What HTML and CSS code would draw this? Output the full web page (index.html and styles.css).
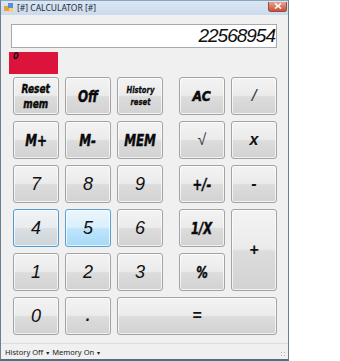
FILE: index.html
```html
<!DOCTYPE html>
<html>
<head>
<meta charset="utf-8">
<link rel="stylesheet" href="styles.css">
</head>
<body>
<div class="window">
  <div class="titlebar">
    <svg class="appicon" width="10" height="10" viewBox="0 0 10 10">
      <rect x="0" y="3" width="5" height="5" fill="#e8a23a"/>
      <rect x="4" y="0" width="5" height="5" fill="#5b8ed6"/>
      <rect x="5" y="5" width="4" height="4" fill="#f4d35e"/>
    </svg>
    <span class="title">[#] CALCULATOR [#]</span>
    <span class="close">
      <svg width="8" height="6" viewBox="0 0 8 6"><path d="M1 0.5 L7 5.5 M7 0.5 L1 5.5" stroke="#fff" stroke-width="1.6"/></svg>
    </span>
  </div>
  <div class="content">
    <div class="display">22568954</div>
    <div class="memory">0</div>
    <div class="keys">
      <button class="key k-heavy k-reset"><span class="lbl">Reset<br>mem</span></button>
      <button class="key k-heavy k-big"><span class="lbl">Off</span></button>
      <button class="key k-heavy k-small"><span class="lbl">History<br>reset</span></button>
      <span class="spacer"></span>
      <button class="key k-heavy k-ac"><span class="lbl">AC</span></button>
      <button class="key k-op k-thin">/</button>

      <button class="key k-heavy k-big"><span class="lbl">M+</span></button>
      <button class="key k-heavy k-big"><span class="lbl">M-</span></button>
      <button class="key k-heavy k-big"><span class="lbl">MEM</span></button>
      <span class="spacer"></span>
      <button class="key k-op k-root">√</button>
      <button class="key k-op k-x">x</button>

      <button class="key k-num">7</button>
      <button class="key k-num">8</button>
      <button class="key k-num">9</button>
      <span class="spacer"></span>
      <button class="key k-heavy k-mid"><span class="lbl">+/-</span></button>
      <button class="key k-op k-bold">-</button>

      <button class="key k-num k-focus">4</button>
      <button class="key k-num k-hover">5</button>
      <button class="key k-num">6</button>
      <span class="spacer"></span>
      <button class="key k-heavy k-mid"><span class="lbl">1/X</span></button>
      <button class="key k-op k-plus">+</button>

      <button class="key k-num">1</button>
      <button class="key k-num">2</button>
      <button class="key k-num">3</button>
      <span class="spacer"></span>
      <button class="key k-heavy k-mid"><span class="lbl">%</span></button>

      <button class="key k-num">0</button>
      <button class="key k-op k-bold">.</button>
      <button class="key k-op k-bold k-eq">=</button>
    </div>
  </div>
  <div class="statusbar">
    <span class="status-item">History Off <span class="caret">▾</span></span>
    <span class="status-item">Memory On <span class="caret">▾</span></span>
    <span class="grip"></span>
  </div>
</div>
</body>
</html>
```

FILE: styles.css
```css
html, body {
  margin: 0;
  padding: 0;
  background: #ffffff;
}

.window {
  box-sizing: border-box;
  width: 289px;
  height: 361px;
  border: 1px solid #6b7f93;
  border-top-color: #8ea4bd;
  border-bottom: 2px solid #4f6f80;
  background: #f0f0f0;
  display: flex;
  flex-direction: column;
  position: relative;
  font-family: "Liberation Sans", Arial, sans-serif;
}

.titlebar {
  height: 14px;
  display: flex;
  align-items: center;
  background: linear-gradient(#dbe6f3, #cbdaec);
  padding-left: 3px;
  gap: 3px;
}

.appicon {
  flex: none;
}

.title {
  font-family: "Noto Sans", "DejaVu Sans", sans-serif;
  font-size: 8.5px;
  color: #1e2b3a;
  flex: 1;
  line-height: 14px;
}

.close {
  width: 17px;
  height: 9px;
  margin-right: 1px;
  margin-bottom: 3px;
  border-radius: 0 0 3px 3px;
  background: linear-gradient(#e8a48f, #c9503a);
  border: 1px solid #9a4a3c;
  border-top: none;
  display: flex;
  align-items: center;
  justify-content: center;
}

.content {
  flex: 1;
  display: flex;
  flex-direction: column;
  padding: 9px 0 0 10px;
}

.display {
  width: 266px;
  height: 24px;
  box-sizing: border-box;
  border: 1px solid #a5a9b0;
  background: #ffffff;
  font-family: "Liberation Sans", Arial, sans-serif;
  font-style: italic;
  font-size: 19px;
  letter-spacing: -1px;
  line-height: 22px;
  text-align: right;
  padding-right: 1px;
  color: #111;
}

.memory {
  margin-top: 4px;
  margin-left: -2px;
  width: 49px;
  height: 22px;
  background: #dc143c;
  font-family: "DejaVu Sans", sans-serif;
  font-style: italic;
  font-weight: bold;
  font-size: 8px;
  line-height: 10px;
  padding-left: 4px;
  box-sizing: border-box;
  color: #111;
}

.keys {
  margin-top: 3px;
  margin-left: 2px;
  display: grid;
  grid-template-columns: 46px 46px 46px 4px 46px 46px;
  grid-auto-rows: 38px;
  gap: 6px;
}

.key {
  margin: 0;
  padding: 0;
  border: 1px solid #a3a3a3;
  border-radius: 3px;
  background: linear-gradient(#f3f3f3 0%, #ebebeb 48%, #dcdcdc 52%, #d2d2d2 100%);
  box-shadow: inset 0 0 0 1px rgba(255,255,255,0.7);
  color: #111;
  display: flex;
  align-items: center;
  justify-content: center;
  text-align: center;
}

.k-num {
  font-family: "Liberation Sans", Arial, sans-serif;
  font-style: italic;
  font-size: 18px;
  padding-top: 1px;
}

.k-heavy {
  font-family: "DejaVu Sans", sans-serif;
  font-style: italic;
  font-weight: bold;
  color: #0a0a0a;
  -webkit-text-stroke: 0.5px #0a0a0a;
}

.lbl {
  display: inline-block;
  transform: scaleX(0.72);
  white-space: nowrap;
}

.k-reset {
  font-size: 12.5px;
  line-height: 15px;
}

.k-big {
  font-size: 16.5px;
}

.k-ac {
  font-size: 14.5px;
}

.k-ac .lbl {
  transform: scaleX(0.85);
}

.k-small {
  font-size: 9.5px;
  line-height: 12px;
  -webkit-text-stroke: 0.3px #0a0a0a;
}

.k-mid {
  font-size: 16px;
}

.k-op {
  font-family: "Liberation Sans", Arial, sans-serif;
  font-style: italic;
}

.k-thin {
  font-size: 17px;
  font-weight: normal;
  color: #333;
}

.k-root {
  font-size: 16px;
  font-style: normal;
  color: #333;
}

.k-x {
  font-size: 16px;
  font-weight: bold;
}

.k-bold {
  font-size: 16px;
  font-weight: bold;
}

.k-plus {
  grid-row: span 2;
  font-size: 16px;
  font-weight: bold;
}

.k-eq {
  grid-column: 3 / span 4;
}

.k-focus {
  border-color: #4d9bd2;
  background: linear-gradient(#f0f4f7 0%, #e8ecef 48%, #d9dfe3 52%, #ced5da 100%);
}

.k-hover {
  border-color: #5a9fcf;
  background: linear-gradient(#eaf6fd 0%, #d9f0fc 48%, #bee6fd 52%, #a7d9f5 100%);
}

.statusbar {
  height: 15px;
  border-top: 1px solid #dcdcdc;
  display: flex;
  align-items: center;
  padding-left: 4px;
  gap: 3px;
  font-family: "Noto Sans", "DejaVu Sans", sans-serif;
  font-size: 7.5px;
  color: #1a1a1a;
  position: relative;
}

.caret {
  font-size: 6px;
  margin-left: 1px;
}

.grip {
  position: absolute;
  right: 2px;
  bottom: 2px;
  width: 6px;
  height: 6px;
  background:
    radial-gradient(circle, #b0b0b0 0.8px, transparent 1px) 0 0 / 3px 3px;
}
```
